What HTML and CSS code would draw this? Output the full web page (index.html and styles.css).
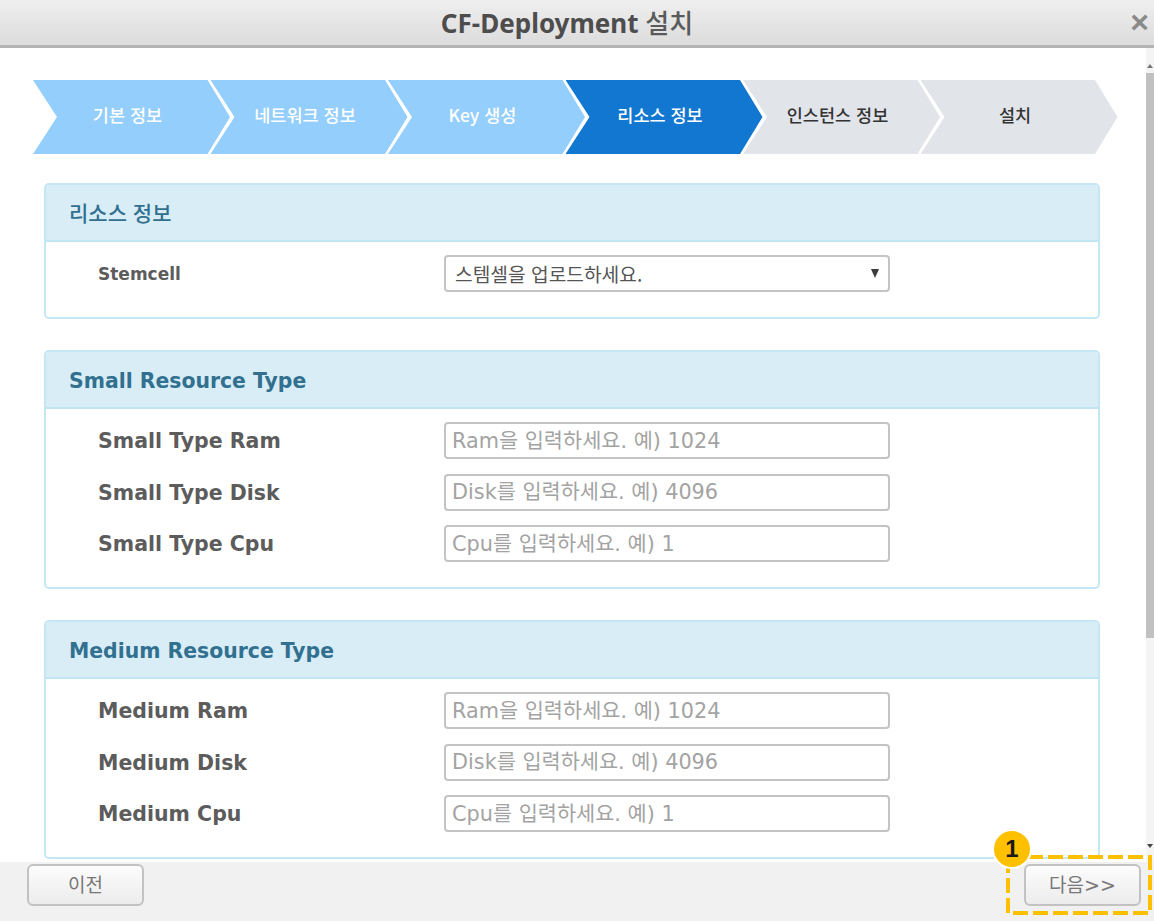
FILE: index.html
```html
<!DOCTYPE html>
<html lang="ko">

<head>
    <meta charset="UTF-8">
    <title>CF-Deployment 설치</title>
    <link rel="stylesheet" href="styles.css">
</head>

<body>
    <div class="popup">
        <div class="popup-head">
            <h1>CF-Deployment <span>설치</span></h1>
            <span class="close">×</span>
        </div>
        <div class="popup-body">
            <div class="content">
                <ul class="steps">
                    <li class="done">기본 정보</li>
                    <li class="done">네트워크 정보</li>
                    <li class="done">Key 생성</li>
                    <li class="active">리소스 정보</li>
                    <li>인스턴스 정보</li>
                    <li>설치</li>
                </ul>

                <div class="panel">
                    <div class="panel-head ko">리소스 정보</div>
                    <div class="panel-body">
                        <div class="row">
                            <label class="small-label">Stemcell</label>
                            <div class="select">스템셀을 업로드하세요.<span class="arrow"></span></div>
                        </div>
                    </div>
                </div>

                <div class="panel">
                    <div class="panel-head">Small Resource Type</div>
                    <div class="panel-body">
                        <div class="row">
                            <label>Small Type Ram</label>
                            <input type="text" placeholder="Ram을 입력하세요. 예) 1024">
                        </div>
                        <div class="row">
                            <label>Small Type Disk</label>
                            <input type="text" placeholder="Disk를 입력하세요. 예) 4096">
                        </div>
                        <div class="row">
                            <label>Small Type Cpu</label>
                            <input type="text" placeholder="Cpu를 입력하세요. 예) 1">
                        </div>
                    </div>
                </div>

                <div class="panel">
                    <div class="panel-head">Medium Resource Type</div>
                    <div class="panel-body">
                        <div class="row">
                            <label>Medium Ram</label>
                            <input type="text" placeholder="Ram을 입력하세요. 예) 1024">
                        </div>
                        <div class="row">
                            <label>Medium Disk</label>
                            <input type="text" placeholder="Disk를 입력하세요. 예) 4096">
                        </div>
                        <div class="row">
                            <label>Medium Cpu</label>
                            <input type="text" placeholder="Cpu를 입력하세요. 예) 1">
                        </div>
                    </div>
                </div>
            </div>
            <div class="scrollbar">
                <span class="scroll-up"></span>
                <span class="thumb"></span>
                <span class="scroll-down"></span>
            </div>
        </div>
        <div class="popup-foot">
            <a href="javascript:void(0);" class="btn">이전</a>
            <a href="javascript:void(0);" class="btn">다음&gt;&gt;</a>
        </div>
    </div>

    <!-- 설명 표시 -->
    <svg class="mark" width="146" height="60" viewBox="0 0 146 60">
        <rect x="2" y="2" width="142" height="56" fill="none" stroke="#ffc000" stroke-width="4" stroke-dasharray="15 5"></rect>
    </svg>
    <div class="badge">1</div>
</body>

</html>
```

FILE: styles.css
```css
* {
    margin: 0;
    padding: 0;
    box-sizing: border-box;
}

html,
body {
    height: 100%;
    overflow: hidden;
}

body {
    position: relative;
    font-family: "DejaVu Sans", "Noto Sans CJK KR", sans-serif;
    background: #fff;
}

a {
    text-decoration: none;
}

ul {
    list-style: none;
}

.popup {
    display: flex;
    flex-direction: column;
    height: 921px;
}

.popup-head {
    position: relative;
    flex: none;
    height: 48px;
    padding-right: 20px;
    border-bottom: 3px solid #b4b4b4;
    background: linear-gradient(#efefef, #dcdcdc);
    text-align: center;
}

.popup-head h1 {
    font-family: "Noto Sans", "Noto Sans CJK KR", sans-serif;
    font-size: 26px;
    font-weight: bold;
    line-height: 46px;
    color: #4d4d4d;
}

.popup-head h1 span {
    font-weight: 500;
    color: #5a5a5a;
}

.close {
    position: absolute;
    right: 5px;
    top: 0;
    font-family: "Liberation Sans", sans-serif;
    font-size: 32px;
    font-weight: bold;
    line-height: 44px;
    color: #8a8a8a;
}

.popup-body {
    flex: none;
    display: flex;
    height: 814px;
    overflow: hidden;
}

.content {
    flex: 1;
    min-width: 0;
    padding: 32px 0 0 33px;
}

.steps {
    display: flex;
    margin-bottom: 29px;
}

.steps li {
    flex: none;
    width: 199px;
    height: 74px;
    margin-right: -21.5px;
    padding-right: 10px;
    font-family: "Noto Sans CJK KR", sans-serif;
    font-size: 17.5px;
    font-weight: 500;
    line-height: 70px;
    text-align: center;
    color: #333;
    background: #e1e4e9;
    clip-path: polygon(0 0, 174.5px 0, 197px 50%, 174.5px 100%, 0 100%, 24px 50%);
}

.steps .done {
    background: #94cefc;
    color: #fff;
}

.steps .active {
    background: #1277d0;
    color: #fff;
}

.panel {
    width: 1056px;
    margin: 0 0 31px 11px;
    border: 2px solid #c4e8f3;
    border-radius: 5px;
    background: #fff;
}

.panel-head {
    height: 57px;
    padding-left: 23px;
    border-bottom: 2px solid #c0e6f2;
    border-radius: 3px 3px 0 0;
    background: #d9edf7;
    font-size: 20.4px;
    font-weight: bold;
    line-height: 58px;
    color: #31708f;
}

.panel-head.ko {
    font-family: "Noto Sans CJK KR", sans-serif;
    font-size: 21px;
    font-weight: 500;
    line-height: 54px;
}

.panel-body {
    padding: 13px 0 25px 52px;
}

.row {
    display: flex;
    align-items: center;
    height: 37px;
    margin-bottom: 14.5px;
}

.row:last-child {
    margin-bottom: 0;
}

.row label {
    flex: none;
    width: 346px;
    padding-top: 1px;
    font-size: 20.5px;
    font-weight: bold;
    color: #5c5c5c;
}

.row .small-label {
    font-size: 17px;
}

.row input,
.select {
    width: 446px;
    height: 37px;
    border: 2px solid #c4c4c4;
    border-radius: 4px;
    background: #fff;
    font-family: "DejaVu Sans", "Noto Sans CJK KR", sans-serif;
    font-size: 20.8px;
    outline: none;
}

.row input {
    padding: 0 6px;
}

.row input::placeholder {
    color: #a3a3a3;
    opacity: 1;
}

.select {
    position: relative;
    padding-left: 9px;
    font-family: "Noto Sans CJK KR", sans-serif;
    font-size: 19.2px;
    line-height: 34px;
    color: #555;
}

.arrow {
    position: absolute;
    right: 9px;
    top: 12px;
    border-left: 4.5px solid transparent;
    border-right: 4.5px solid transparent;
    border-top: 9px solid #3c3c3c;
}

.scrollbar {
    position: relative;
    flex: none;
    width: 8px;
    background: #f4f4f4;
}

.thumb {
    position: absolute;
    left: 0;
    top: 25px;
    width: 8px;
    height: 565px;
    background: #c1c1c1;
}

.scroll-up,
.scroll-down {
    position: absolute;
    left: 1px;
    border-left: 3px solid transparent;
    border-right: 3px solid transparent;
}

.scroll-up {
    top: 16px;
    border-bottom: 4px solid #777;
}

.scroll-down {
    bottom: 14px;
    border-top: 4px solid #444;
}

.popup-foot {
    flex: 1;
    display: flex;
    justify-content: space-between;
    padding: 2px 13px 0 27px;
    background: #f1f1f1;
}

.btn {
    width: 117px;
    height: 42px;
    border: 2px solid #c2c2c2;
    border-radius: 6px;
    background: linear-gradient(#fcfcfc, #ececec);
    font-family: "DejaVu Sans", "Noto Sans CJK KR", sans-serif;
    font-size: 19px;
    line-height: 38px;
    text-align: center;
    color: #777;
}

.mark {
    position: absolute;
    left: 1006px;
    top: 855px;
}

.badge {
    position: absolute;
    left: 992px;
    top: 829px;
    width: 40px;
    height: 40px;
    border: 2px solid #fff;
    border-radius: 50%;
    background: #ffc000;
    font-family: "Liberation Sans", sans-serif;
    font-size: 24px;
    font-weight: bold;
    line-height: 36px;
    text-align: center;
    color: #1a1a1a;
}
```
